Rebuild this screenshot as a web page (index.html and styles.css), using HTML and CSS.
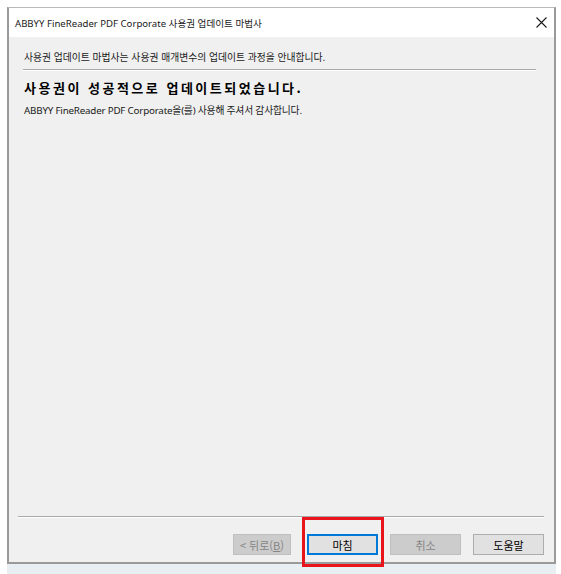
FILE: index.html
```html
<!DOCTYPE html>
<html lang="ko">
<head>
<meta charset="utf-8">
<link rel="stylesheet" href="styles.css">
</head>
<body>
<div class="window">
  <div class="titlebar">
    <span class="title">ABBYY FineReader PDF Corporate 사용권 업데이트 마법사</span>
    <svg class="close" width="11" height="11" viewBox="0 0 11 11"><path d="M0.5 0.5 L10.5 10.5 M10.5 0.5 L0.5 10.5" stroke="#1a1a1a" stroke-width="1.1" fill="none"/></svg>
  </div>
  <div class="body">
    <div class="content">
      <p class="subtitle">사용권 업데이트 마법사는 사용권 매개변수의 업데이트 과정을 안내합니다.</p>
      <div class="rule"></div>
      <h1 class="heading">사용권이 성공적으로 업데이트되었습니다.</h1>
      <p class="message">ABBYY FineReader PDF Corporate을(를) 사용해 주셔서 감사합니다.</p>
    </div>
    <div class="footer">
      <div class="rule bottom-rule"></div>
      <div class="buttons">
        <button class="btn disabled back">&lt; 뒤로(<u>B</u>)</button>
        <span class="highlight-wrap">
          <button class="btn primary">마침</button>
          <span class="highlight"></span>
        </span>
        <button class="btn disabled">취소</button>
        <button class="btn">도움말</button>
      </div>
    </div>
  </div>
</div>
<div class="strip"></div>
</body>
</html>
```

FILE: styles.css
```css
html, body {
  margin: 0;
  padding: 0;
  background: #ffffff;
}
body {
  padding: 7px 0 0 7px;
  font-family: "Noto Sans", "Noto Sans CJK KR", sans-serif;
  color: #000;
}
.window {
  width: 545px;
  height: 554px;
  border-top: 1px solid #b9b9b9;
  border-left: 2px solid #9a9a9a;
  border-right: 2px solid #9a9a9a;
  border-bottom: 2px solid #9a9a9a;
  display: flex;
  flex-direction: column;
  background: #f0f0f0;
}
.titlebar {
  height: 29px;
  background: #ffffff;
  display: flex;
  align-items: center;
  justify-content: space-between;
  padding: 0 7px 0 6px;
  flex-shrink: 0;
}
.title {
  font-size: 9.6px;
  color: #1a1a1a;
}
.close {
  display: block;
}
.body {
  flex: 1;
  display: flex;
  flex-direction: column;
  justify-content: space-between;
}
.content {
  padding: 13px 18px 0 15px;
}
.subtitle {
  margin: 0;
  font-family: "Noto Sans CJK KR", sans-serif;
  font-size: 9.8px;
  line-height: 14px;
  color: #1a1a1a;
}
.rule {
  height: 0;
  border-top: 1px solid #a9a9a9;
  border-bottom: 1px solid #ffffff;
}
.content .rule {
  margin-top: 5px;
  margin-left: -1px;
}
.heading {
  margin: 6px 0 0 0;
  font-family: "Noto Sans CJK KR", sans-serif;
  font-size: 13px;
  font-weight: bold;
  line-height: 22px;
  letter-spacing: 2.5px;
  color: #000;
}
.message {
  margin: 5px 0 0 0;
  font-family: "Noto Sans", "Noto Sans CJK KR", sans-serif;
  font-size: 9.8px;
  line-height: 14px;
  color: #1a1a1a;
  letter-spacing: -0.2px;
}
.footer {
  padding: 0 10px 7px 9px;
}
.buttons {
  display: flex;
  justify-content: flex-end;
  align-items: center;
  gap: 12px;
  margin-top: 16px;
}
.btn {
  width: 71px;
  height: 21px;
  box-sizing: border-box;
  border: 1px solid #adadad;
  background: #e1e1e1;
  font-family: "Noto Sans CJK KR", sans-serif;
  font-size: 11px;
  color: #000;
  padding: 0;
  margin: 0;
}
.btn.disabled {
  background: #cccccc;
  border-color: #bfbfbf;
  color: #858585;
}
.btn.back {
  width: 58px;
  margin-right: 4px;
}
.btn.primary {
  border: 2px solid #0078d7;
  display: block;
}
.highlight-wrap {
  position: relative;
  display: block;
}
.highlight {
  position: absolute;
  left: -5px;
  right: -6px;
  top: -17px;
  bottom: -12px;
  border: 3px solid #e8131b;
}
.strip {
  width: 549px;
  height: 10px;
  background: #e9eef3;
}
```
